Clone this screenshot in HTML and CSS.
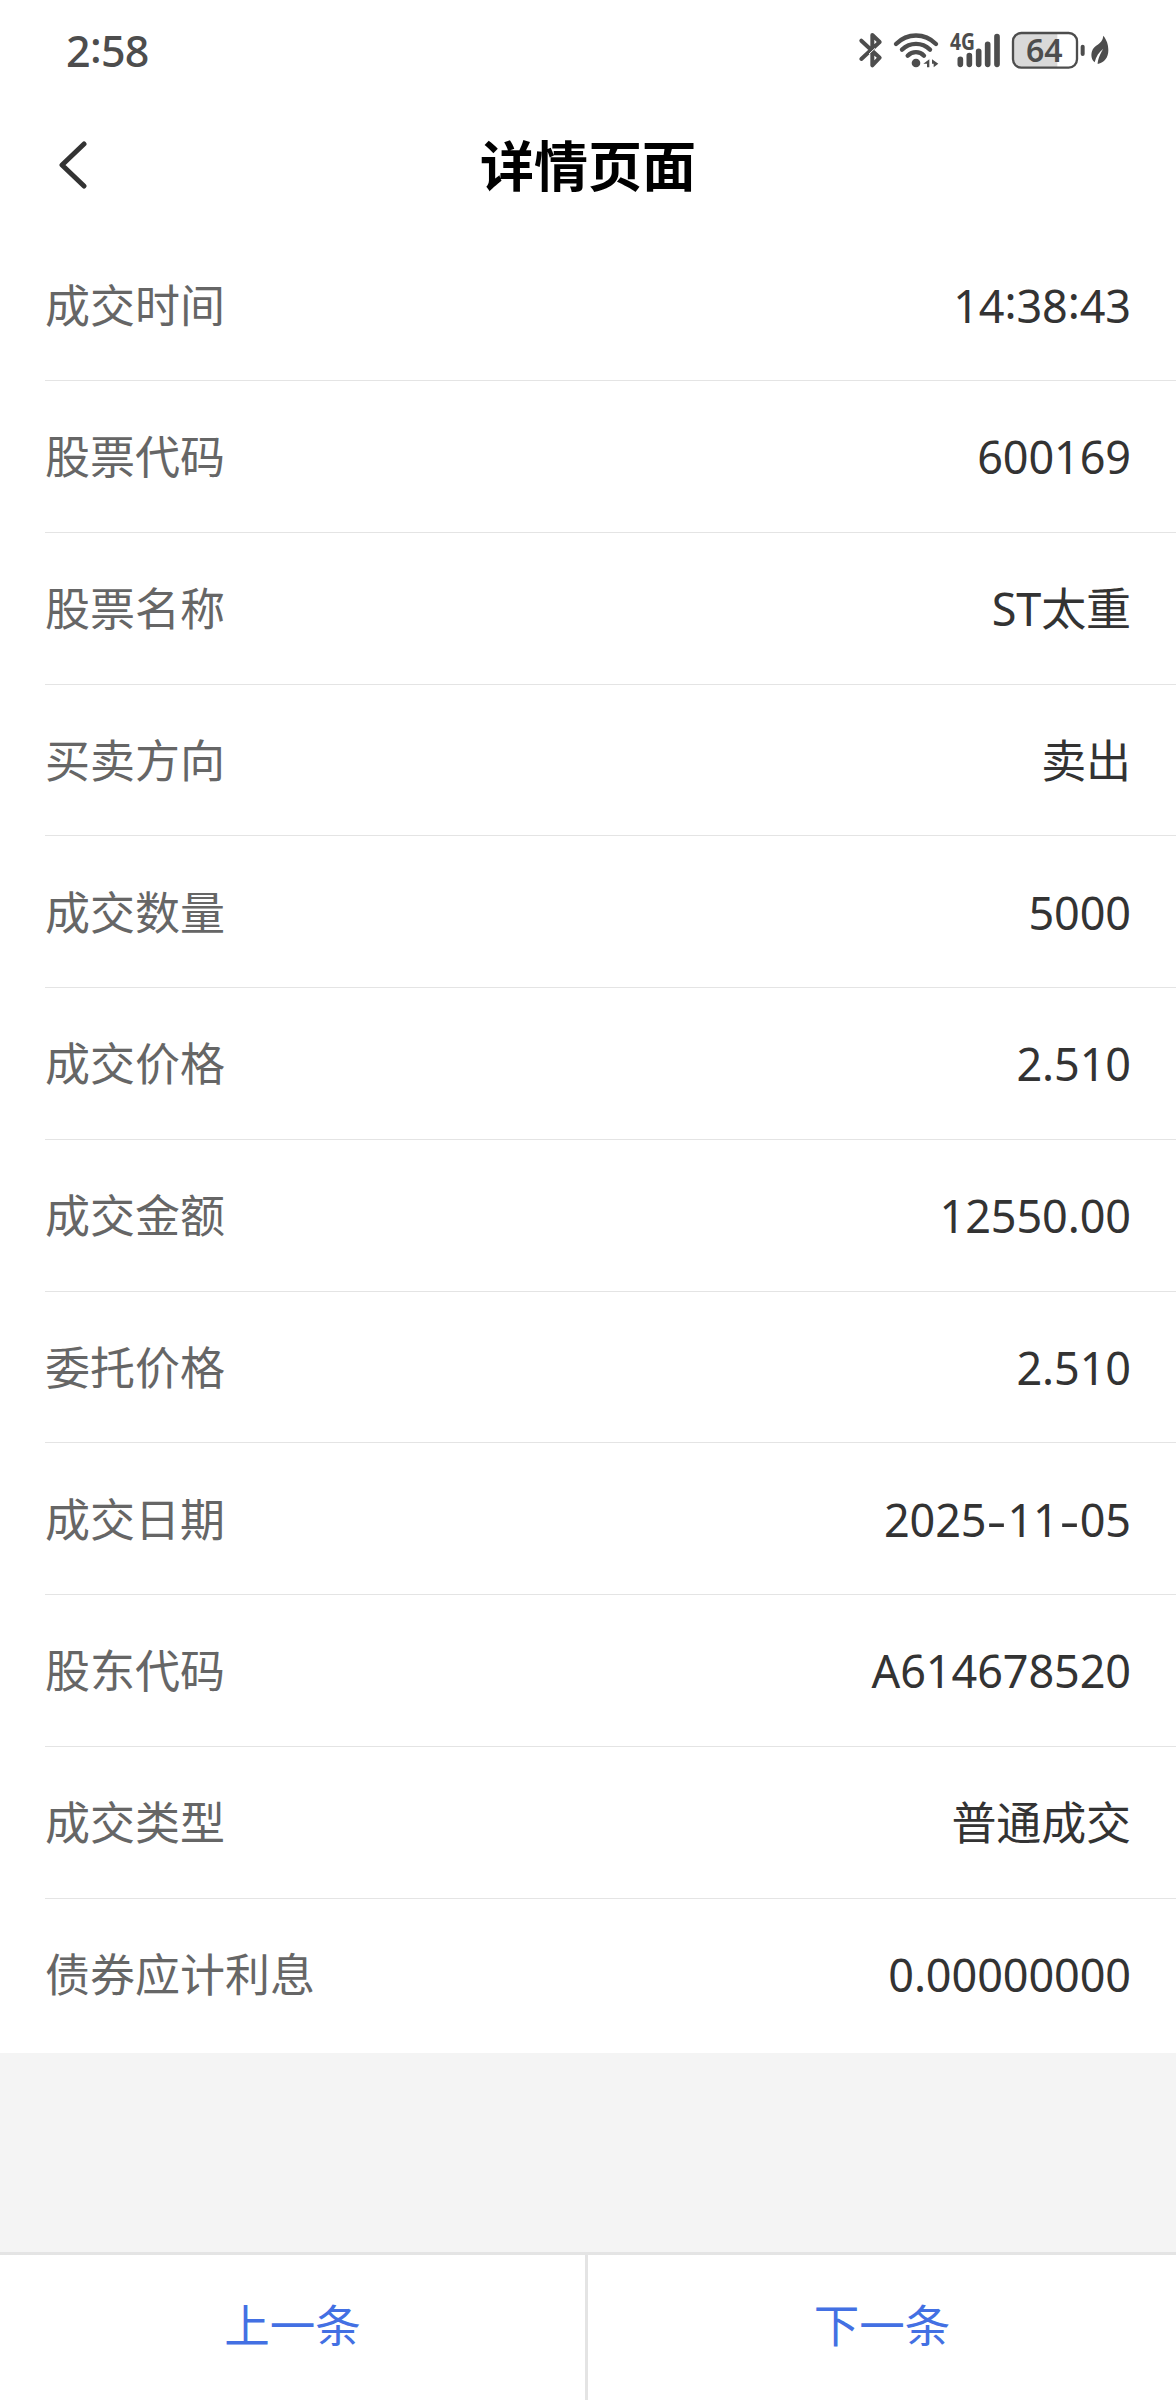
FILE: index.html
```html
<!DOCTYPE html>
<html lang="zh-CN">
<head>
<meta charset="utf-8">
<title>详情页面</title>
<link rel="stylesheet" href="styles.css">
</head>
<body>
<header class="status">
  <span class="clock">2<span class="colon">:</span>58</span>
  <div class="icons">
    <svg class="bluetooth" viewBox="57 45 72 117"><path d="M64 74 119 125 97 148V57L119 78 64 129" fill="none" stroke="#4d4d4d" stroke-width="12" stroke-linecap="round" stroke-linejoin="round"/><path d="M87 114 105 97" stroke="#fff" stroke-width="3"/></svg>
    <svg class="wifi" viewBox="159 45 141 117"><g fill="none" stroke="#4d4d4d" stroke-width="13" stroke-linecap="round"><path d="M168 84C202 50 254 50 288 84"/><path d="M186 101C210 78 246 78 270 101"/><path d="M203 119C217 105 239 105 252 119"/></g><circle cx="228" cy="141" r="13" fill="#4d4d4d"/><path d="M250 143 268 130V154H261V143ZM276 130 295 143 281 154V143H276Z" fill="#4d4d4d"/></svg>
    <svg class="signal" viewBox="327 45 156 117"><text class="network" x="330" y="103" textLength="75" lengthAdjust="spacingAndGlyphs">4G</text><path d="M361 130V145M388 119V145M416 106V145M443 85V145M471 62V145" fill="none" stroke="#4d4d4d" stroke-width="17" stroke-linecap="round"/></svg>
    <svg class="battery" viewBox="513 45 225 117"><path d="M545 51H652V155H545Q520 155 520 130V76Q520 51 545 51Z" fill="#d9d9d9"/><rect x="519" y="51" width="192" height="104" rx="25" fill="none" stroke="#4d4d4d" stroke-width="7"/><path d="M728 92V114" stroke="#4d4d4d" stroke-width="12" stroke-linecap="round"/><text class="charge" x="558" y="137" textLength="110" lengthAdjust="spacingAndGlyphs">64</text></svg>
    <svg class="leaf" viewBox="750 45 60 117"><path d="M790 59C800 72 805 84 805 103C805 125 793 140 773 144C773 130 781 112 790 98C777 108 768 121 764 139C755 132 752 119 756 106C762 84 787 88 790 59Z" fill="#4d4d4d"/></svg>
  </div>
</header>
<nav class="nav">
  <svg class="back" viewBox="0 0 30 50"><path d="M27 4 5 25 27 46" fill="none" stroke="#333" stroke-width="5" stroke-linecap="round" stroke-linejoin="round"/></svg>
  <h1 class="title">详情页面</h1>
</nav>
<main class="list">
  <div class="row"><span class="label">成交时间</span><span class="value">14<span class="colon">:</span>38<span class="colon">:</span>43</span></div>
  <div class="row"><span class="label">股票代码</span><span class="value">600169</span></div>
  <div class="row"><span class="label">股票名称</span><span class="value">ST太重</span></div>
  <div class="row"><span class="label">买卖方向</span><span class="value">卖出</span></div>
  <div class="row"><span class="label">成交数量</span><span class="value">5000</span></div>
  <div class="row"><span class="label">成交价格</span><span class="value">2.510</span></div>
  <div class="row"><span class="label">成交金额</span><span class="value">12550.00</span></div>
  <div class="row"><span class="label">委托价格</span><span class="value">2.510</span></div>
  <div class="row"><span class="label">成交日期</span><span class="value">2025<span class="dash">-</span>11<span class="dash">-</span>05</span></div>
  <div class="row"><span class="label">股东代码</span><span class="value">A614678520</span></div>
  <div class="row"><span class="label">成交类型</span><span class="value">普通成交</span></div>
  <div class="row"><span class="label">债券应计利息</span><span class="value">0.00000000</span></div>
</main>
<footer class="pager">
  <a class="page-link">上一条</a>
  <a class="page-link">下一条</a>
</footer>
</body>
</html>
```
FILE: styles.css
```css
* { box-sizing: border-box; }

body {
  margin: 0;
  height: 2400px;
  display: flex;
  flex-direction: column;
  background: #f4f4f4;
  font-family: "Noto Sans", "Noto Sans CJK SC", sans-serif;
  font-size: 45px;
  line-height: 60px;
}

.status {
  height: 100px;
  padding: 0 66px 0 66px;
  display: flex;
  justify-content: space-between;
  align-items: center;
  background: #fff;
}
.clock { color: #4d4d4d; font-size: 43px; font-weight: 500; letter-spacing: -0.7px; padding-top: 1px; }
.icons { display: flex; height: 39px; }
.icons svg { height: 39px; display: block; overflow: visible; }
.bluetooth { width: 24px; margin-right: 10px; }
.wifi { width: 47px; margin-right: 9px; }
.signal { width: 52px; margin-right: 10px; }
.battery { width: 75px; margin-right: 4px; }
.leaf { width: 20px; }
.network { font: 700 68px "Noto Sans", sans-serif; fill: #4d4d4d; }
.charge { font: 600 95px "Noto Sans", sans-serif; fill: #4d4d4d; }

.nav {
  height: 129.25px;
  padding: 0 57px;
  display: grid;
  grid-template-columns: 30px 1fr 30px;
  align-items: center;
  background: #fff;
}
.back { width: 30px; height: 50px; }
.title { margin: 0; padding-top: 2px; text-align: center; font-size: 54px; font-weight: 700; color: #000; }

.list { background: #fff; padding: 0 0 2.75px 45px; }
.row {
  height: 151.75px;
  padding: 2px 45px 0 0;
  display: flex;
  justify-content: space-between;
  align-items: center;
  border-bottom: 1px solid #e4e4e4;
}
.row:last-child { border-bottom-color: transparent; }
.label { color: #666; }
.value { color: #333; letter-spacing: -0.1px; }
.colon, .dash { display: inline-block; }
.colon { transform: translateY(-4px); }
.dash { width: 21px; text-align: center; transform: scaleX(1.35); }

.pager {
  height: 148px;
  margin-top: auto;
  display: grid;
  grid-template-columns: 588px 1fr;
  background: #fff;
  border-top: 3px solid #e4e4e4;
}
.page-link { color: #4370e3; font-size: 45.5px; text-align: center; padding-top: 40px; }
.page-link:first-child { border-right: 3px solid #e4e4e4; }
```
